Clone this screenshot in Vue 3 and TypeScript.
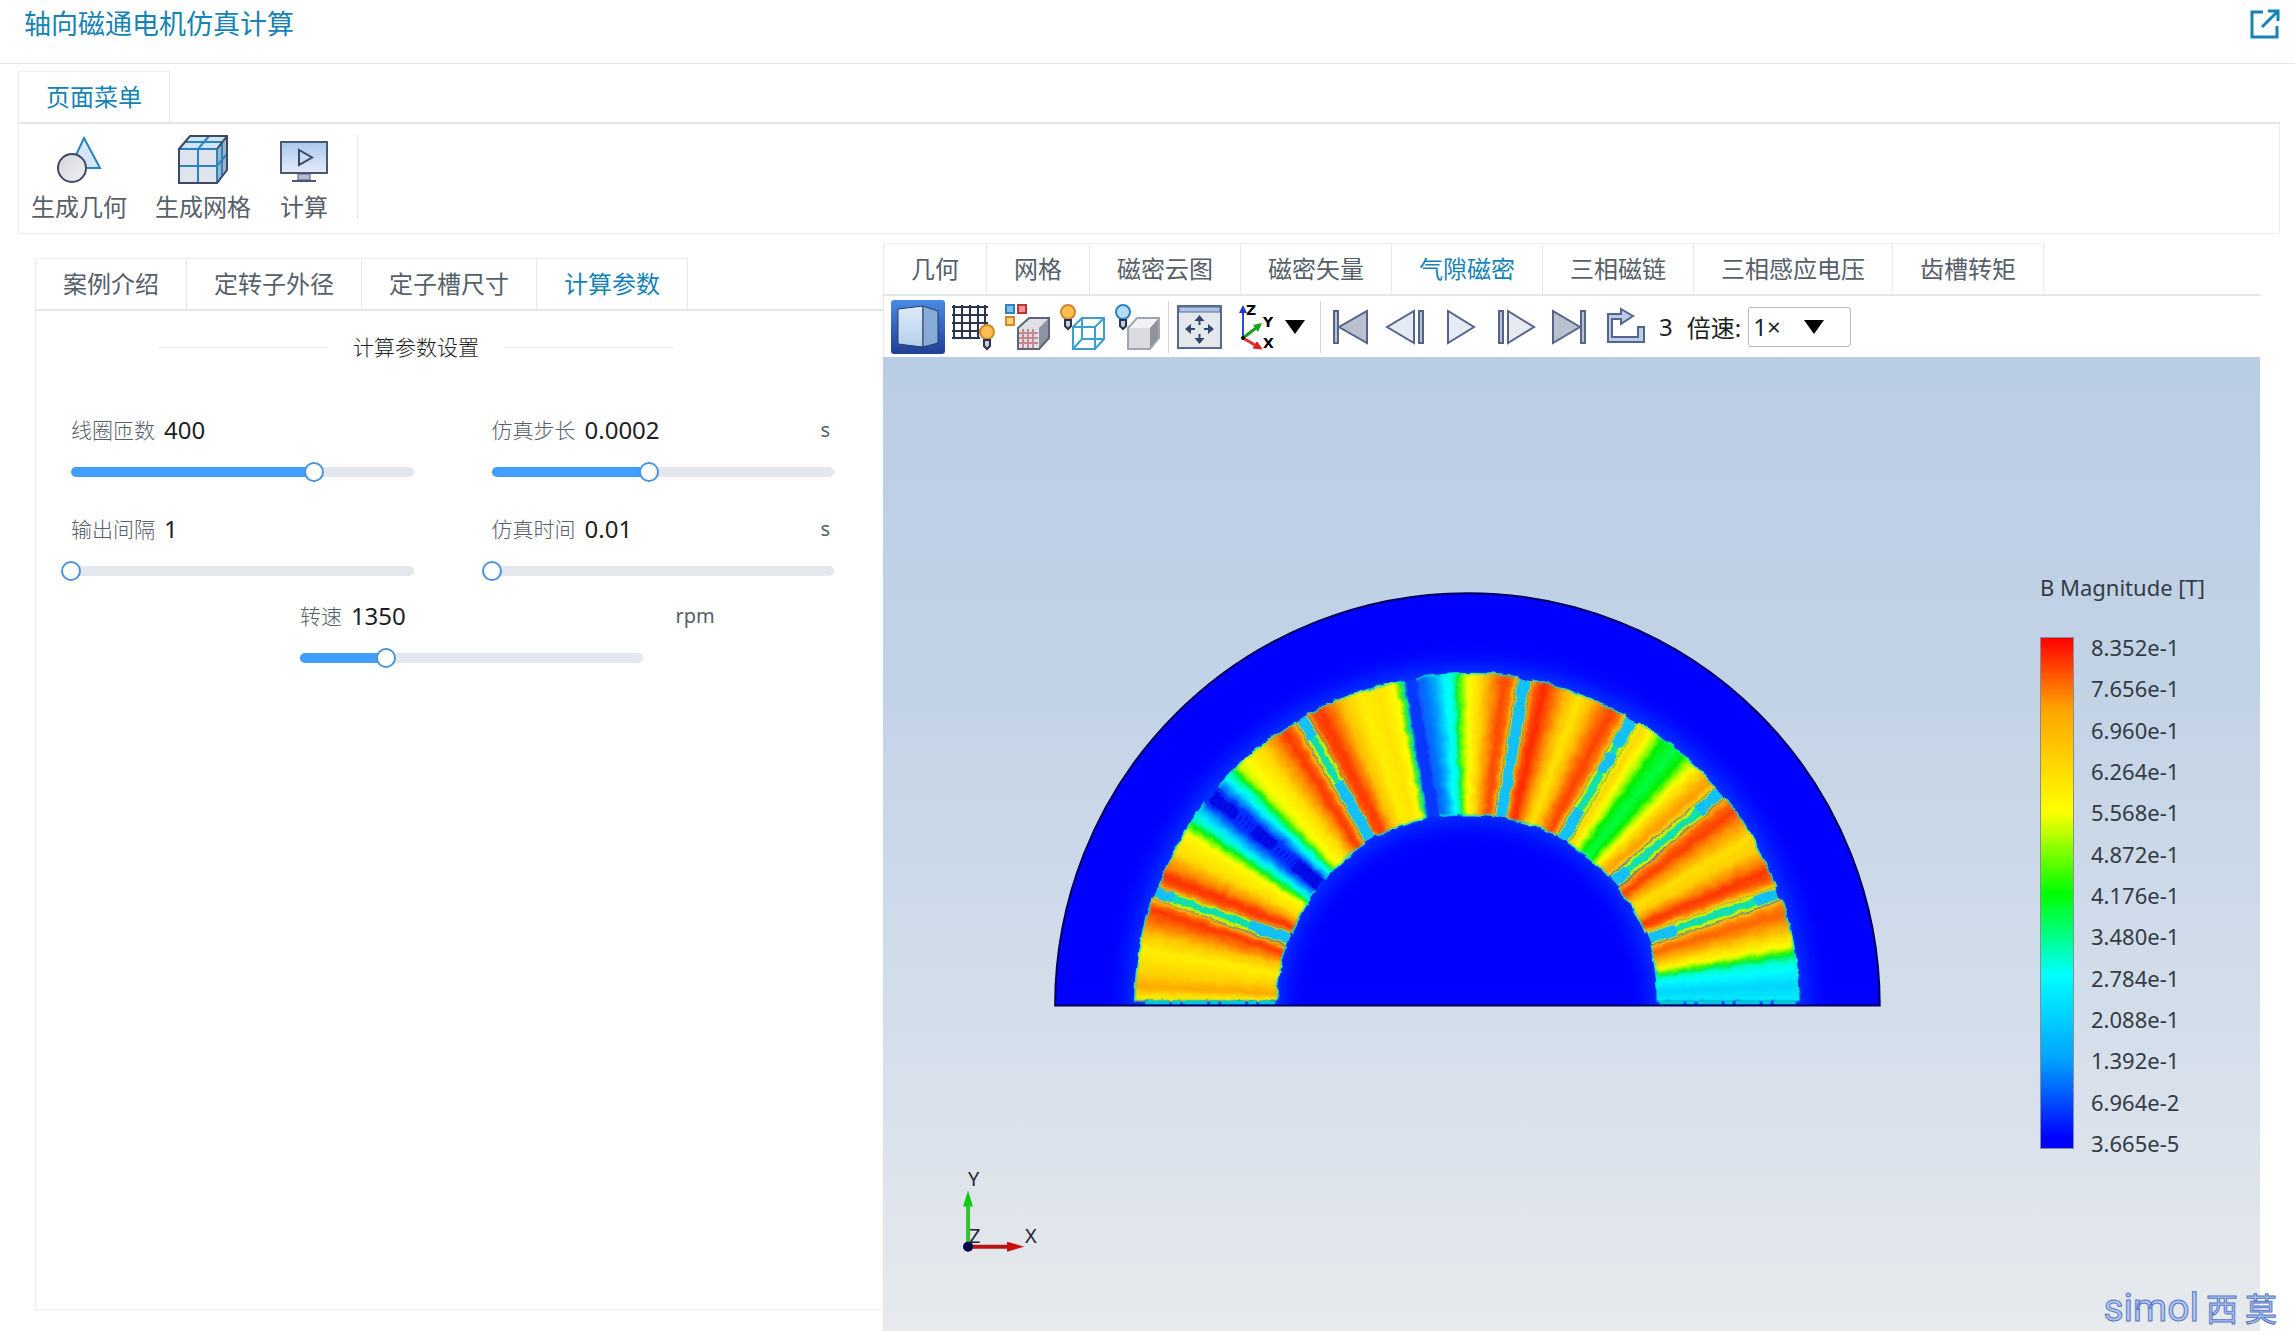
<script setup lang="ts">
import { ref } from 'vue'

type Point = [number, number]
type Stop = [number, string]

interface Magnet {
  // outer and inner corner of the first edge, then of the second edge
  corners: [Point, Point, Point, Point]
  stops: Stop[]
}

interface Field {
  id: string
  label: string
  text: string
  unit: string
  value: number
}

const caseTabs = ['案例介绍', '定转子外径', '定子槽尺寸', '计算参数']
const viewTabs = ['几何', '网格', '磁密云图', '磁密矢量', '气隙磁密', '三相磁链', '三相感应电压', '齿槽转矩']
const activeCase = ref('计算参数')
const activeView = ref('气隙磁密')
const speed = ref('1×')

const fields = ref<Field[]>([
  { id: 'turns', label: '线圈匝数', text: '400', unit: '', value: 71 },
  { id: 'step', label: '仿真步长', text: '0.0002', unit: 's', value: 46 },
  { id: 'interval', label: '输出间隔', text: '1', unit: '', value: 0 },
  { id: 'time', label: '仿真时间', text: '0.01', unit: 's', value: 0 },
  { id: 'rpm', label: '转速', text: '1350', unit: 'rpm', value: 25 },
])

const legend = [
  '8.352e-1', '7.656e-1', '6.960e-1', '6.264e-1', '5.568e-1', '4.872e-1', '4.176e-1',
  '3.480e-1', '2.784e-1', '2.088e-1', '1.392e-1', '6.964e-2', '3.665e-5',
]

const centre: Point = [1468, 1005]

const magnets: Magnet[] = [
  {
    corners: [[1137, 1000], [1276, 1000], [1154, 898], [1286, 945]],
    stops: [[0, '#c8ff00'], [0.04, '#ffe600'], [0.14, '#ffa800'], [0.28, '#ffd400'], [0.5, '#fff000'], [0.66, '#ffc400'], [0.8, '#ff6a00'], [0.9, '#ff3400'], [0.97, '#ff7800'], [1, '#ffe000']],
  },
  {
    corners: [[1160, 887], [1292, 932], [1207, 803], [1315, 890]],
    stops: [[0, '#ffb400'], [0.06, '#ff5000'], [0.14, '#ff3000'], [0.26, '#ff9000'], [0.4, '#ffdc00'], [0.64, '#ffff00'], [0.7, '#60ff00'], [0.74, '#00f000'], [0.8, '#00ffc0'], [0.86, '#00f0ff'], [0.95, '#0090ff'], [1, '#0050ff']],
  },
  {
    corners: [[1220, 787], [1325, 877], [1297, 723], [1365, 842]],
    stops: [[0, '#0060ff'], [0.06, '#00a0ff'], [0.12, '#00ffff'], [0.19, '#00ffa0'], [0.23, '#00f000'], [0.3, '#d0ff00'], [0.38, '#ffff00'], [0.58, '#ffdc00'], [0.74, '#ff8c00'], [0.86, '#ff3800'], [0.95, '#ff6400'], [1, '#ffd000']],
  },
  {
    corners: [[1309, 715], [1377, 835], [1405, 682], [1427, 817]],
    stops: [[0, '#ffc000'], [0.04, '#ff5000'], [0.14, '#ff3800'], [0.24, '#ff7800'], [0.36, '#ffc400'], [0.55, '#fff000'], [0.75, '#ffe400'], [0.91, '#ffff00'], [0.95, '#40f000'], [1, '#00e0c0']],
  },
  {
    corners: [[1417, 679], [1440, 815], [1518, 678], [1495, 815]],
    stops: [[0, '#1058ff'], [0.1, '#0078ff'], [0.2, '#00b4ff'], [0.29, '#00ffff'], [0.36, '#00ffe0'], [0.41, '#00f020'], [0.46, '#80ff00'], [0.52, '#ffff00'], [0.65, '#ffd800'], [0.77, '#ff9000'], [0.87, '#ff4800'], [0.96, '#ff6c00'], [1, '#ffe000']],
  },
  {
    corners: [[1532, 681], [1508, 817], [1626, 717], [1558, 834]],
    stops: [[0, '#ffd000'], [0.04, '#ff6400'], [0.14, '#ff2400'], [0.24, '#ff6400'], [0.36, '#ffb400'], [0.5, '#ffe800'], [0.64, '#ffb800'], [0.74, '#ff7800'], [0.86, '#ff4000'], [0.96, '#ff8000'], [1, '#ffe000']],
  },
  {
    corners: [[1638, 723], [1570, 842], [1715, 788], [1610, 875]],
    stops: [[0, '#e0ff00'], [0.07, '#ffd800'], [0.17, '#ffff00'], [0.24, '#90ff00'], [0.3, '#00f000'], [0.45, '#00ff40'], [0.57, '#00f000'], [0.64, '#a0ff00'], [0.7, '#ffff00'], [0.84, '#ffbc00'], [0.93, '#ff9c00'], [1, '#ffe000']],
  },
  {
    corners: [[1725, 798], [1620, 887], [1775, 887], [1647, 932]],
    stops: [[0, '#ffc000'], [0.07, '#ff6800'], [0.16, '#ff3c00'], [0.28, '#ff9000'], [0.45, '#ffe000'], [0.6, '#ffd000'], [0.72, '#ff8c00'], [0.83, '#ff3400'], [0.92, '#ff5c00'], [0.98, '#ffb000'], [1, '#ffff00']],
  },
  {
    corners: [[1781, 900], [1652, 945], [1798, 1000], [1659, 1000]],
    stops: [[0, '#ffe000'], [0.05, '#ff9000'], [0.14, '#ff6400'], [0.25, '#ffa000'], [0.36, '#ffdc00'], [0.46, '#ffff00'], [0.51, '#60f800'], [0.55, '#00f020'], [0.61, '#00ffd0'], [0.7, '#00ffff'], [0.85, '#00d4ff'], [1, '#00f0ff']],
  },
]

function polar(a: Point, b: Point, t: number): Point {
  const ax = a[0] - centre[0]
  const ay = centre[1] - a[1]
  const bx = b[0] - centre[0]
  const by = centre[1] - b[1]
  const angle = Math.atan2(ay, ax) * (1 - t) + Math.atan2(by, bx) * t
  const radius = Math.hypot(ax, ay) * (1 - t) + Math.hypot(bx, by) * t
  return [centre[0] + radius * Math.cos(angle), centre[1] - radius * Math.sin(angle)]
}

function channels(hex: string): number[] {
  return [1, 3, 5].map((i) => parseInt(hex.slice(i, i + 2), 16))
}

function colourAt(stops: Stop[], t: number): string {
  const next = Math.max(1, stops.findIndex((s) => s[0] >= t))
  const [t0, c0] = stops[next - 1]
  const [t1, c1] = stops[next]
  const k = (t - t0) / (t1 - t0)
  const to = channels(c1)
  return `rgb(${channels(c0).map((v, i) => Math.round(v + (to[i] - v) * k)).join(',')})`
}

function pointList(points: Point[]): string {
  return points.map((p) => `${p[0].toFixed(1)},${p[1].toFixed(1)}`).join(' ')
}

const stripCount = 48
const strips = magnets.flatMap((m) => {
  const [outA, inA, outB, inB] = m.corners
  return Array.from({ length: stripCount }, (_, i) => {
    const t0 = i / stripCount
    const t1 = (i + 1) / stripCount
    return {
      fill: colourAt(m.stops, (t0 + t1) / 2),
      points: pointList([polar(outA, outB, t0), polar(outA, outB, t1), polar(inA, inB, t1), polar(inA, inB, t0)]),
    }
  })
})

const outlines = magnets.map((m) => {
  const [outA, inA, outB, inB] = m.corners
  const steps = [0, 0.125, 0.25, 0.375, 0.5, 0.625, 0.75, 0.875, 1]
  return {
    outer: pointList(steps.map((t) => polar(outA, outB, t))),
    inner: pointList(steps.map((t) => polar(inA, inB, t))),
  }
})

// narrow slots between neighbouring magnets; dash lists the solid and broken stretches from the outer rim
const slots = [
  { a: [1157, 892], b: [1289, 938], dash: '18 80 50 200' },
  { a: [1303, 719], b: [1371, 838], dash: '22 50 70 200' },
  { a: [1525, 680], b: [1502, 816], dash: '140 200' },
  { a: [1632, 720], b: [1564, 838], dash: '30 8 22 44 40 200' },
  { a: [1720, 793], b: [1615, 881], dash: '28 92 20 200' },
  { a: [1778, 893], b: [1650, 938], dash: '24 84 30 200' },
]
</script>

<template>
  <div class="page">
    <header class="topbar">
      <h1>轴向磁通电机仿真计算</h1>
      <button class="bare" aria-label="在新窗口打开">
        <svg width="32" height="32" viewBox="0 0 32 32" fill="none" stroke="#1583b5" stroke-width="3">
          <path d="M14 4H3v25h25V18M19 3h10v10M29 3L13 19" />
        </svg>
      </button>
    </header>

    <section class="ribbon">
      <div class="tabs"><button class="tab active">页面菜单</button></div>
      <div class="ribbon-body">
        <button class="tool">
          <svg width="50" height="50" viewBox="0 0 50 50">
            <defs>
              <linearGradient id="ball" x1="0" y1="0" x2="1" y2="1"><stop offset="0" stop-color="#d2d5da" /><stop offset="1" stop-color="#eff0f4" /></linearGradient>
            </defs>
            <path d="M30 3L46 33H16z" fill="#d4e6f7" stroke="#2a83bd" stroke-width="2" />
            <circle cx="18" cy="33" r="14" fill="url(#ball)" stroke="#3d4766" stroke-width="2" />
          </svg>
          <span>生成几何</span>
        </button>
        <button class="tool">
          <svg width="50" height="50" viewBox="0 0 50 50">
            <path d="M1 14L12 1h37v34L39 48H1z" fill="#dfe4ee" />
            <path d="M1 14L12 1h37L39 14z" fill="#cfe4f6" />
            <path d="M39 14L49 1v34L39 48z" fill="#9fb2cc" />
            <path d="M1 31h38l10-12M20 48V14L31 1M6 7h38v34" fill="none" stroke="#2a83bd" stroke-width="2" />
            <path d="M1 14h38v34" fill="none" stroke="#2a83bd" stroke-width="2" />
            <path d="M1 14L12 1h37v34L39 48H1zM39 14L49 1" fill="none" stroke="#3d4766" stroke-width="2" />
          </svg>
          <span>生成网格</span>
        </button>
        <button class="tool">
          <svg width="50" height="50" viewBox="0 0 50 50">
            <defs>
              <linearGradient id="screen" x1="0" y1="0" x2="0" y2="1"><stop offset="0" stop-color="#a9c9ee" /><stop offset="1" stop-color="#e3ecf8" /></linearGradient>
            </defs>
            <rect x="2" y="7" width="46" height="31" fill="url(#screen)" stroke="#4b5675" stroke-width="2" />
            <path d="M20 15v15l13-7.500z" fill="#c5dbf5" stroke="#3d4766" stroke-width="2" />
            <path d="M19 39h12v6H19z" fill="#b9bfce" stroke="#4b5675" stroke-width="1" />
            <path d="M13 46h24" stroke="#4b5675" stroke-width="2" />
          </svg>
          <span>计算</span>
        </button>
        <i class="tool-end"></i>
      </div>
    </section>

    <main class="content">
      <section class="case">
        <div class="tabs">
          <button v-for="t in caseTabs" :key="t" class="tab" :class="{ active: t === activeCase }" @click="activeCase = t">{{ t }}</button>
        </div>
        <div class="case-body">
          <h2><span>计算参数设置</span></h2>
          <form class="fields" @submit.prevent>
            <div v-for="f in fields" :key="f.id" class="field" :class="{ single: f.id === 'rpm' }">
              <div class="field-head">
                <label :for="f.id">{{ f.label }}</label>
                <output :for="f.id">{{ f.text }}</output>
                <span class="unit">{{ f.unit }}</span>
              </div>
              <div class="slider">
                <div class="fill" :style="{ width: f.value + '%' }"></div>
                <input :id="f.id" v-model.number="f.value" type="range" min="0" max="100" />
              </div>
            </div>
          </form>
        </div>
      </section>

      <section class="view">
        <div class="tabs">
          <button v-for="t in viewTabs" :key="t" class="tab" :class="{ active: t === activeView }" @click="activeView = t">{{ t }}</button>
        </div>
        <div class="toolbar">
          <button class="icon pressed" aria-label="着色">
            <svg viewBox="0 0 54 54">
              <defs>
                <linearGradient id="face" x1="0" y1="0" x2="0" y2="1"><stop offset="0" stop-color="#dcebf9" /><stop offset="1" stop-color="#b5cfea" /></linearGradient>
              </defs>
              <path d="M7 9l25-3v41L7 44z" fill="url(#face)" stroke="#293a6c" />
              <path d="M32 6l15 5v32l-15 4z" fill="#86acd6" stroke="#293a6c" />
            </svg>
          </button>
          <button class="icon" aria-label="网格显示">
            <svg viewBox="0 0 54 54">
              <path d="M6 7h36M6 15h36M6 23h36M6 31h30M6 38h28M8 5v34M16 5v34M24 5v34M32 5v34M39 5v20" stroke="#2b3350" stroke-width="2" fill="none" />
              <circle cx="41" cy="32" r="7" fill="#ffbe4d" stroke="#c98a34" stroke-width="2" />
              <path d="M38 40h6v6l-3 3-3-3z" fill="#c9ced8" stroke="#2b3350" stroke-width="2" />
            </svg>
          </button>
          <button class="icon" aria-label="面着色">
            <svg viewBox="0 0 54 54">
              <path d="M5 5h8v8H5z" fill="#7cc4ef" stroke="#2a83bd" stroke-width="2" />
              <path d="M17 5h8v8h-8z" fill="#f29191" stroke="#b23a3a" stroke-width="2" />
              <path d="M5 17h8v8H5z" fill="#ffd07a" stroke="#d08a2a" stroke-width="2" />
              <path d="M17 28l11-10h20v20L38 49H17z" fill="#dde0e6" />
              <path d="M38 28l10-10v20L38 49z" fill="#8c93a3" />
              <path d="M17 28l11-10h20v20L38 49H17z" fill="none" stroke="#5b6478" stroke-width="2" />
              <path d="M22 29v19M27 29v19M32 29v19M18 33h19M18 38h19M18 43h19" stroke="#c9868c" stroke-width="2" />
            </svg>
          </button>
          <button class="icon" aria-label="线框">
            <svg viewBox="0 0 54 54">
              <path d="M17 27h22v22H17zM26 18h22v21H26zM17 27l9-9M39 27l9-9M17 49l9-10M39 49l9-10" fill="none" stroke="#3c9fd2" stroke-width="2" />
              <circle cx="12" cy="12" r="7" fill="#ffbe4d" stroke="#c98a34" stroke-width="2" />
              <path d="M9 20h6v6l-3 3-3-3z" fill="#c9ced8" stroke="#2b3350" stroke-width="2" />
            </svg>
          </button>
          <button class="icon" aria-label="实体">
            <svg viewBox="0 0 54 54">
              <path d="M17 28l9-10h22v20L39 49H17z" fill="#d9dbdf" />
              <path d="M17 28l9-10h22l-9 10z" fill="#f1f2f4" />
              <path d="M39 28l9-10v20l-9 11z" fill="#8d939d" />
              <path d="M17 28l9-10h22v20L39 49H17z" fill="none" stroke="#a0a5ae" stroke-width="2" />
              <circle cx="12" cy="12" r="7" fill="#b5dbf8" stroke="#2a83bd" stroke-width="2" />
              <path d="M9 20h6v6l-3 3-3-3z" fill="#c9ced8" stroke="#2b3350" stroke-width="2" />
            </svg>
          </button>
          <i class="rule"></i>
          <button class="icon" aria-label="适应窗口">
            <svg viewBox="0 0 54 54">
              <rect x="6" y="6" width="43" height="42" fill="#e4e7ec" stroke="#5a6a8c" stroke-width="2" />
              <path d="M7 7h41v5H7z" fill="#a9c4ea" stroke="#5a6a8c" />
              <path d="M27.500 15l-5 6h10zM27.500 44l-5-6h10zM13 29l6-5v10zM42 29l-6-5v10z" fill="#34456e" />
              <path d="M27.500 20v5M27.500 34v5M18 29h5M32 29h5" stroke="#34456e" stroke-width="2" />
            </svg>
          </button>
          <button class="icon" aria-label="视图方向">
            <svg viewBox="0 0 54 54">
              <path d="M16 38V12" stroke="#3048d0" stroke-width="2" />
              <path d="M16 5l-4 8h8z" fill="#2038c8" />
              <path d="M16 38l13-10" stroke="#18a018" stroke-width="3" />
              <path d="M35 23l-9 2 5 7z" fill="#18a018" />
              <path d="M16 38l12 7" stroke="#e03030" stroke-width="3" />
              <path d="M35 49l-5-7-4 6z" fill="#e02020" stroke="#e02020" />
              <circle cx="16" cy="38" r="2" />
              <g class="axis-mini"><text x="19" y="15">Z</text><text x="36" y="27">Y</text><text x="36" y="48">X</text></g>
            </svg>
          </button>
          <button class="drop" aria-label="更多视图"><svg width="20" height="14" viewBox="0 0 20 14"><path d="M0 0h20L10 14z" /></svg></button>
          <i class="rule"></i>
          <button class="icon play" aria-label="首帧"><svg viewBox="0 0 54 54"><path class="solid" d="M43 11v32L15 27zM10 11h4v32h-4z" /></svg></button>
          <button class="icon play" aria-label="上一帧"><svg viewBox="0 0 54 54"><path d="M35 11v32L8 27z" /><path class="solid" d="M40 11h4v32h-4z" /></svg></button>
          <button class="icon play" aria-label="播放"><svg viewBox="0 0 54 54"><path d="M14 11v32l26-16z" /></svg></button>
          <button class="icon play" aria-label="下一帧"><svg viewBox="0 0 54 54"><path d="M19 11v32l26-16z" /><path class="solid" d="M10 11h4v32h-4z" /></svg></button>
          <button class="icon play" aria-label="末帧"><svg viewBox="0 0 54 54"><path class="solid" d="M9 11v32l27-16zM37 11h4v32h-4z" /></svg></button>
          <button class="icon play" aria-label="循环"><svg viewBox="0 0 54 54"><path class="loop" d="M22 9l12 7-12 8v-5h-9v18h26V27h6v15H9V14h13z" /></svg></button>
          <span class="frame">3</span>
          <label for="speed">倍速:</label>
          <div class="select">
            <select id="speed" v-model="speed"><option>1×</option><option>2×</option><option>4×</option></select>
            <svg width="20" height="14" viewBox="0 0 20 14"><path d="M0 0h20L10 14z" /></svg>
          </div>
        </div>

        <div class="scene">
          <svg class="plot" viewBox="884 357 1376 974" preserveAspectRatio="xMinYMin meet">
            <defs>
              <filter id="mesh" x="-5%" y="-5%" width="110%" height="110%" color-interpolation-filters="sRGB">
                <feTurbulence type="fractalNoise" baseFrequency="0.09" numOctaves="2" seed="4" result="n" />
                <feDisplacementMap in="SourceGraphic" in2="n" scale="5" xChannelSelector="R" yChannelSelector="G" />
              </filter>
              <filter id="glow" x="-20%" y="-20%" width="140%" height="140%"><feGaussianBlur stdDeviation="13" /></filter>
              <filter id="soft"><feGaussianBlur stdDeviation="1" /></filter>
              <clipPath id="half"><path d="M1056 1005a412 412 0 0 1 824 0z" /></clipPath>
            </defs>
            <path d="M1056 1005a412 412 0 0 1 824 0z" fill="#0000ff" />
            <g clip-path="url(#half)">
              <circle cx="1468" cy="1005" r="262" fill="none" stroke="#0458ff" stroke-width="150" filter="url(#glow)" opacity="0.8" />
              <path d="M1411 680L1434 816" stroke="#0838ff" stroke-width="14" />
              <g filter="url(#mesh)">
                <path d="M1213 795L1320 884" stroke="#0030ff" stroke-width="20" />
                <g v-for="(s, i) in slots" :key="'slot' + i">
                  <line :x1="s.a[0]" :y1="s.a[1]" :x2="s.b[0]" :y2="s.b[1]" stroke="#c0f000" stroke-width="13" />
                  <line :x1="s.a[0]" :y1="s.a[1]" :x2="s.b[0]" :y2="s.b[1]" stroke="#10e0b0" stroke-width="7" />
                  <line :x1="s.a[0]" :y1="s.a[1]" :x2="s.b[0]" :y2="s.b[1]" stroke="#14c0f8" stroke-width="11" :stroke-dasharray="s.dash" />
                </g>
                <g v-for="(o, i) in outlines" :key="'out' + i" fill="none" stroke="#00e6c8" stroke-width="4">
                  <polyline :points="o.outer" />
                  <polyline :points="o.inner" />
                </g>
                <g filter="url(#soft)">
                  <polygon v-for="(s, i) in strips" :key="i" :points="s.points" :fill="s.fill" :stroke="s.fill" stroke-width="1" />
                </g>
                <path d="M1213 795L1320 884" stroke="#0008e0" stroke-width="12" stroke-dasharray="30 24 26 28 31" />
                <path d="M1213 795L1320 884" stroke="#0010f0" stroke-width="9" stroke-dasharray="2 3" />
              </g>
              <path d="M1146 1002H1276M1660 1002H1796" stroke="#00c8d8" stroke-width="4" stroke-dasharray="24 3 8 3" />
            </g>
            <path d="M1056 1005a412 412 0 0 1 824 0z" fill="none" stroke="#00005a" stroke-width="2" />

            <path d="M969 1244v-40" stroke="#2fc42f" stroke-width="4" />
            <path d="M969 1190l-5 16h10z" fill="#14c814" />
            <path d="M969 1246h42" stroke="#b81414" stroke-width="4" />
            <path d="M1025 1246l-17-5v10z" fill="#c80f0f" />
            <g class="axis"><text x="969" y="1185">Y</text><text x="970" y="1242">Z</text><text x="1026" y="1242">X</text></g>
            <circle cx="969" cy="1246" r="5" fill="#00004a" />
          </svg>
          <div class="legend">
            <p>B Magnitude [T]</p>
            <div class="scale">
              <div class="bar"></div>
              <ul><li v-for="v in legend" :key="v">{{ v }}</li></ul>
            </div>
          </div>
        </div>
      </section>
    </main>
    <div class="brand"><span class="latin">simol</span><span>西</span><span>莫</span></div>
  </div>
</template>

<style>
body {
  margin: 0;
  background: #fff;
}
</style>

<style scoped>
.page {
  position: relative;
  display: flex;
  flex-direction: column;
  min-height: 100vh;
  font-family: "Noto Sans", "Noto Sans CJK SC", sans-serif;
  font-size: 24px;
  font-weight: 400;
  color: #56606a;
}
button,
select {
  margin: 0;
  padding: 0;
  border: 0;
  background: none;
  font: inherit;
  color: inherit;
}
svg {
  display: block;
}
.topbar {
  display: flex;
  align-items: center;
  justify-content: space-between;
  box-sizing: border-box;
  height: 64px;
  padding: 0 14px 15px 24px;
  border-bottom: 1px solid #e4e6e8;
}
h1 {
  margin: 0;
  font-size: 27px;
  font-weight: 400;
  line-height: 40px;
  color: #1583b5;
}
.ribbon {
  margin: 7px 15px 0 18px;
}
.tabs {
  display: flex;
  height: 51px;
  border-bottom: 2px solid #e4e6e8;
}
.tab {
  padding: 0 27px;
  border-top: 1px solid #efefef;
  border-right: 1px solid #e8e8e8;
  line-height: 50px;
  white-space: nowrap;
}
.tab:first-child {
  border-left: 1px solid #e8e8e8;
}
.tab.active {
  color: #1583b5;
}
.ribbon-body {
  display: flex;
  align-items: flex-start;
  gap: 28px;
  box-sizing: border-box;
  height: 110px;
  padding: 11px 12px;
  border: 1px solid #ececec;
  border-top: 0;
}
.tool {
  display: flex;
  flex-direction: column;
  align-items: center;
  gap: 6px;
  line-height: 32px;
}
.tool-end {
  width: 1px;
  height: 84px;
  background: #e8e8e8;
}
.content {
  flex: 1;
  display: grid;
  grid-template-columns: 848fr 1377fr;
  padding: 0 35px;
}
.case {
  display: flex;
  flex-direction: column;
  margin: 24px 0 22px;
}
.case-body {
  flex: 1;
  padding: 0 49px 0 35px;
  border: solid #ececec;
  border-width: 0 0 1px 1px;
}
h2 {
  display: flex;
  align-items: center;
  gap: 26px;
  width: 516px;
  margin: 18px 0 0 87px;
  font-size: 21px;
  font-weight: 300;
  line-height: 36px;
  color: #1c1f22;
}
h2::before,
h2::after {
  content: "";
  flex: 1;
  height: 1px;
  background: #ededed;
}
.fields {
  display: grid;
  grid-template-columns: 1fr 1fr;
  column-gap: 78px;
  margin-top: 46px;
}
.field {
  height: 99px;
}
.field.single {
  grid-column: 1 / 3;
  width: 45%;
  margin-top: -12px;
  margin-left: 30%;
}
.field-head {
  display: flex;
  align-items: center;
  gap: 9px;
  height: 36px;
}
.single .field-head {
  width: 122%;
}
.field-head label {
  font-size: 21px;
  font-weight: 300;
}
.field-head output {
  color: #1c1f22;
}
.unit {
  margin-left: auto;
  padding-right: 4px;
  font-size: 20px;
}
.slider {
  position: relative;
  height: 10px;
  margin-top: 20px;
  border-radius: 5px;
  background: #e4e7ed;
}
.fill {
  height: 10px;
  border-radius: 5px;
  background: #409eff;
}
.slider input {
  position: absolute;
  top: -5px;
  left: -10px;
  width: calc(100% + 20px);
  height: 20px;
  margin: 0;
  background: none;
  appearance: none;
}
.slider input::-webkit-slider-thumb {
  box-sizing: border-box;
  width: 20px;
  height: 20px;
  border: 2px solid #4a94dc;
  border-radius: 50%;
  background: #fff;
  appearance: none;
}
.view {
  display: flex;
  flex-direction: column;
  margin-top: 9px;
}
.toolbar {
  display: flex;
  align-items: center;
  gap: 1px;
  box-sizing: border-box;
  height: 61px;
  padding: 0 7px;
  border-left: 1px solid #e8e8e8;
  color: #1c1f22;
}
.icon {
  flex: none;
  width: 54px;
  height: 54px;
}
.icon svg {
  width: 54px;
  height: 54px;
}
.icon.pressed {
  border-radius: 3px;
  background: linear-gradient(#4a8ae6, #1f3f94);
}
.rule {
  width: 1px;
  height: 52px;
  margin: 0 2px;
  background: #d4d4d4;
}
.drop {
  margin: 0 12px 0 3px;
}
.play path {
  fill: #e6eaf2;
  stroke: #55648a;
  stroke-width: 2;
}
.play .solid {
  fill: #b9c1cf;
}
.play .loop {
  fill: #b9cdea;
}
.axis-mini text {
  font: bold 14px "DejaVu Sans", sans-serif;
}
.frame {
  margin: 0 13px 0 5px;
}
.toolbar label {
  margin-right: 6px;
}
.select {
  position: relative;
}
.select select {
  box-sizing: border-box;
  width: 103px;
  height: 40px;
  padding-left: 4px;
  border: 1px solid #b8b8b8;
  border-radius: 3px;
  line-height: 36px;
  appearance: none;
}
.select svg {
  position: absolute;
  top: 13px;
  right: 27px;
  pointer-events: none;
}
.scene {
  position: relative;
  flex: 1;
  background: linear-gradient(#b9cde5, #c3d3e6 35%, #dae2ec 80%, #e8eaec);
}
.plot {
  width: 100%;
}
.axis text {
  font: 20px "Noto Sans", sans-serif;
  fill: #23272c;
}
.legend {
  position: absolute;
  top: 214px;
  right: 50px;
  width: 170px;
  font-size: 22px;
  font-weight: 400;
  line-height: 32px;
  color: #333b44;
}
.legend p {
  margin: 0;
  white-space: nowrap;
}
.scale {
  display: flex;
  gap: 17px;
  margin-top: 28px;
}
.bar {
  box-sizing: border-box;
  width: 34px;
  height: 512px;
  margin-top: 6px;
  border: 1px solid #8a8a9a;
  background: linear-gradient(#f00, #ffa500 14%, #ff0 34%, #0f0 50%, #0ff 66%, #00a0ff 83%, #00f 98%);
}
.scale ul {
  display: flex;
  flex-direction: column;
  justify-content: space-between;
  height: 528px;
  margin: 0;
  padding: 0;
  list-style: none;
}
.brand {
  position: absolute;
  right: 18px;
  bottom: 0;
  display: flex;
  align-items: baseline;
  gap: 7px;
  font-size: 32px;
  line-height: 46px;
  font-weight: 400;
  color: #b4c6ec;
  -webkit-text-stroke: 1px #5478c8;
}
.latin {
  font-family: Roboto, sans-serif;
  font-size: 39px;
}
</style>
